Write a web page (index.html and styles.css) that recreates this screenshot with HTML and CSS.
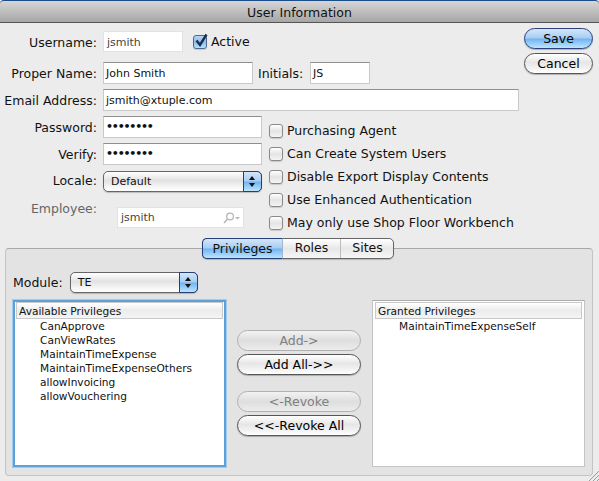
FILE: index.html
```html
<!DOCTYPE html>
<html lang="en">
<head>
  <meta charset="UTF-8" />
  <title>User Information</title>
  <link rel="stylesheet" href="styles.css">
</head>
<body>
  <div class="window">
    <div class="titlebar">User Information</div>

    <div class="top">
      <div class="form">
        <div class="row row-user">
          <span class="label">Username:</span>
          <div class="field field-user field-ro">jsmith</div>
          <span class="check check-on">
            <svg width="16" height="16" viewBox="0 0 16 16"><path d="M3.5 7.5 L7 12 L13.5 1.5" fill="none" stroke="#1c2f4f" stroke-width="2.4"/></svg>
          </span>
          <span class="active-text">Active</span>
        </div>
        <div class="row row-name">
          <span class="label">Proper Name:</span>
          <div class="field field-name">John Smith</div>
          <span class="initials-label">Initials:</span>
          <div class="field field-initials">JS</div>
        </div>
        <div class="row row-email">
          <span class="label">Email Address:</span>
          <div class="field field-email">jsmith@xtuple.com</div>
        </div>

        <div class="lower">
          <div class="lower-left">
            <div class="row row-pass">
              <span class="label">Password:</span>
              <div class="field field-pass">••••••••</div>
            </div>
            <div class="row row-verify">
              <span class="label">Verify:</span>
              <div class="field field-pass">••••••••</div>
            </div>
            <div class="row row-locale">
              <span class="label">Locale:</span>
              <div class="select select-locale">
                <span class="select-text">Default</span>
                <span class="stepper"><i class="up"></i><i class="down"></i></span>
              </div>
            </div>
            <div class="row row-employee">
              <span class="label label-off">Employee:</span>
              <div class="field field-ro field-employee">
                <span>jsmith</span>
                <svg class="search" width="20" height="12" viewBox="0 0 20 12">
                  <circle cx="8" cy="4.5" r="3.4" fill="none" stroke="#b5b5b5" stroke-width="1.2"/>
                  <path d="M5.5 7 L2 11" stroke="#b5b5b5" stroke-width="1.5"/>
                  <path d="M13 5 L18 5 L15.5 7.5 Z" fill="#b5b5b5"/>
                </svg>
              </div>
            </div>
          </div>

          <div class="checks">
            <div class="check-row"><span class="check"></span>Purchasing Agent</div>
            <div class="check-row"><span class="check"></span>Can Create System Users</div>
            <div class="check-row"><span class="check"></span>Disable Export Display Contents</div>
            <div class="check-row"><span class="check"></span>Use Enhanced Authentication</div>
            <div class="check-row"><span class="check"></span>May only use Shop Floor Workbench</div>
          </div>
        </div>
      </div>

      <div class="actions">
        <button class="btn btn-default">Save</button>
        <button class="btn">Cancel</button>
      </div>
    </div>

    <div class="panel">
      <div class="tabs">
        <span class="tab tab-on">Privileges</span>
        <span class="tab tab-roles">Roles</span>
        <span class="tab tab-sites">Sites</span>
      </div>

      <div class="module">
        <span>Module:</span>
        <div class="select select-module">
          <span class="select-text">TE</span>
          <span class="stepper"><i class="up"></i><i class="down"></i></span>
        </div>
      </div>

      <div class="lists">
        <div class="list list-focus">
          <div class="list-head">Available Privileges</div>
          <div class="list-item">CanApprove</div>
          <div class="list-item">CanViewRates</div>
          <div class="list-item">MaintainTimeExpense</div>
          <div class="list-item">MaintainTimeExpenseOthers</div>
          <div class="list-item">allowInvoicing</div>
          <div class="list-item">allowVouchering</div>
        </div>

        <div class="moves">
          <button class="btn btn-wide btn-off">Add-&gt;</button>
          <button class="btn btn-wide">Add All-&gt;&gt;</button>
          <button class="btn btn-wide btn-off btn-gap">&lt;-Revoke</button>
          <button class="btn btn-wide">&lt;&lt;-Revoke All</button>
        </div>

        <div class="list">
          <div class="list-head">Granted Privileges</div>
          <div class="list-item">MaintainTimeExpenseSelf</div>
        </div>
      </div>
    </div>

    <svg class="grip" width="11" height="11" viewBox="0 0 11 11">
      <path d="M1 11 L11 1 M5 11 L11 5 M9 11 L11 9" stroke="#9a9a9a" stroke-width="1"/>
    </svg>
  </div>
</body>
</html>
```

FILE: styles.css
```css
html, body {
  margin: 0;
  padding: 0;
  background: #ececec;
}

.window {
  position: relative;
  width: 599px;
  height: 481px;
  overflow: hidden;
  background: #ececec;
  color: #111;
  font-family: "DejaVu Sans", sans-serif;
  font-size: 12.5px;
  line-height: 16px;
}

/* Title bar */
.titlebar {
  height: 21px;
  border-top: 1px solid #1b4c8c;
  border-bottom: 1px solid #555;
  border-radius: 4px 4px 0 0;
  background: linear-gradient(#d6d6d6, #a6a6a6);
  text-align: center;
  line-height: 23px;
  box-sizing: content-box;
  margin-bottom: 0;
}

/* Top part */
.top {
  display: flex;
  height: 225px;
}

.form {
  width: 524px;
}

.row {
  display: flex;
  align-items: center;
}

.row-user { margin-top: 8px; height: 21px; }
.row-name { margin-top: 10px; height: 22px; }
.row-email { margin-top: 5px; height: 22px; }
.row-verify { margin-top: 5px; }
.row-pass, .row-verify { height: 22px; }
.row-locale { margin-top: 6px; height: 21px; }
.row-employee { margin-top: 15px; height: 21px; align-items: flex-start; }

.row-user .label, .row-name .label, .row-email .label, .initials-label {
  padding-top: 2px;
}

.row-pass .label, .row-verify .label {
  padding-top: 1px;
}

.row-locale .label {
  margin-top: -1px;
}

.label {
  width: 97px;
  margin-right: 6px;
  text-align: right;
  white-space: nowrap;
}

.label-off {
  margin-top: -6px;
  color: #666;
}

.field {
  box-sizing: border-box;
  height: 100%;
  padding: 1px 0 0 2px;
  background: #fff;
  border: 1px solid #c9c9c9;
  border-top-color: #8f8f8f;
  font-size: 11px;
  line-height: 20px;
  white-space: nowrap;
}

.field-ro {
  padding-left: 3px;
  border-color: #e2e2e2;
  color: #444;
}

.field-user { width: 80px; }
.field-name { width: 150px; }
.field-initials { width: 60px; }
.field-email { width: 416px; }

.field-pass {
  width: 159px;
  padding-top: 0;
  letter-spacing: -1.2px;
  font-weight: bold;
}

.field-employee {
  display: flex;
  justify-content: space-between;
  align-items: center;
  width: 127px;
  margin-left: 14px;
}

.search {
  margin-right: 1px;
}

.initials-label {
  width: 52px;
  margin-left: 5px;
}

.active-text {
  margin-left: 4px;
}

/* Checkboxes */
.check {
  display: inline-block;
  flex: none;
  box-sizing: border-box;
  width: 14px;
  height: 14px;
  border: 1px solid #8a8a8a;
  border-radius: 3px;
  background: linear-gradient(#fff, #e4e4e4 50%, #f4f4f4);
  box-shadow: 0 1px 1px rgba(0, 0, 0, 0.15);
}

.check svg {
  display: block;
  margin: -3px 0 0 -1px;
}

.check-on {
  margin-left: 10px;
  border-color: #4a6a94;
  background: linear-gradient(#b7d5f3, #8fbdea 50%, #b5e2fb);
}

.lower {
  display: flex;
  margin-top: 5px;
}

.lower-left {
  width: 269px;
}

.checks {
  padding-top: 8px;
}

.check-row {
  display: flex;
  align-items: center;
  gap: 4px;
  height: 14px;
  margin-bottom: 9px;
  white-space: nowrap;
}

/* Select */
.select {
  position: relative;
  box-sizing: border-box;
  height: 100%;
  border: 1px solid #666;
  border-radius: 5px;
  background: linear-gradient(#fff, #e2e2e2 45%, #f6f6f6 80%, #fff);
  font-size: 11px;
  line-height: 19px;
  box-shadow: 0 1px 1px rgba(0, 0, 0, 0.2);
}

.select-locale { width: 159px; }
.select-module { width: 128px; height: 21px; }

.select-text {
  padding-left: 7px;
}

.stepper {
  position: absolute;
  top: -1px;
  right: -1px;
  bottom: -1px;
  width: 19px;
  box-sizing: border-box;
  border: 1px solid #243f78;
  border-radius: 0 5px 5px 0;
  background: linear-gradient(#d4e6f8, #a6cdf3 48%, #70b3f0 52%, #bce6fd);
}

.stepper i {
  position: absolute;
  left: 5px;
  width: 0;
  height: 0;
  border-left: 3px solid transparent;
  border-right: 3px solid transparent;
}

.stepper .up { top: 4px; border-bottom: 4px solid #111; }
.stepper .down { bottom: 4px; border-top: 4px solid #111; }

/* Buttons */
.actions {
  display: flex;
  flex-direction: column;
  gap: 4px;
  padding-top: 5px;
}

.btn {
  box-sizing: border-box;
  width: 69px;
  height: 21px;
  padding: 0;
  border: 1px solid #555;
  border-radius: 11px;
  background: linear-gradient(#fff, #e6e6e6 45%, #f2f2f2 75%, #fff);
  color: #000;
  font-family: inherit;
  font-size: 12.5px;
  line-height: 17px;
  box-shadow: 0 1px 1px rgba(0, 0, 0, 0.25);
}

.btn-default {
  border-color: #2a3f7c;
  background: linear-gradient(#d4e6f8, #a6cdf3 48%, #70b3f0 52%, #bce6fd);
}

.btn-wide {
  width: 124px;
}

.btn-off {
  border-color: #b0b0b0;
  background: linear-gradient(#f2f2f2, #dedede 50%, #ececec);
  color: #808080;
  box-shadow: none;
}

.btn-gap {
  margin-top: 13px;
}

/* Panel with tabs */
.panel {
  box-sizing: border-box;
  height: 228px;
  margin: 0 6px 0 5px;
  padding: 0 7px;
  border: 1px solid #c4c4c4;
  border-top-color: #a8a8a8;
  border-radius: 4px;
  background: #e3e3e3;
}

.tabs {
  display: flex;
  width: 192px;
  height: 21px;
  box-sizing: border-box;
  margin: -11px auto 0 189px;
  border: 1px solid #666;
  border-radius: 5px;
  background: linear-gradient(#fff, #e8e8e8 50%, #f6f6f6);
  line-height: 18px;
  text-align: center;
  box-shadow: 0 1px 1px rgba(0, 0, 0, 0.2);
}

.tab {
  flex: none;
}

.tab-on {
  width: 81px;
  margin: -1px 0 -1px -1px;
  padding-top: 1px;
  border: 1px solid #243f78;
  border-right: 1px solid #a0b8d0;
  border-radius: 5px 0 0 5px;
  background: linear-gradient(#d4e6f8, #a6cdf3 48%, #70b3f0 52%, #bce6fd);
  box-sizing: border-box;
}

.tab-roles {
  width: 58px;
  border-right: 1px solid #bdbdbd;
  box-sizing: border-box;
}

.tab-sites {
  width: 53px;
}

.module {
  display: flex;
  align-items: center;
  gap: 7px;
  height: 21px;
  margin-top: 13px;
}

.lists {
  display: flex;
  justify-content: space-between;
  margin-top: 7px;
}

.list {
  box-sizing: border-box;
  width: 213px;
  height: 167px;
  padding: 1px 2px 2px;
  background: #fff;
  border: 1px solid #c4c4c4;
  border-top-color: #ababab;
  font-size: 10.6px;
  line-height: 14px;
}

.list-focus {
  border: 1px solid #5ba2dc;
  box-shadow: 0 0 0 1px #a5cbec;
  outline: 1px solid #5ba2dc;
  outline-offset: -2px;
}

.list-head {
  box-sizing: border-box;
  height: 17px;
  margin-bottom: 0;
  padding-left: 2px;
  border: 1px solid #c9c9c9;
  background: linear-gradient(#fff, #ececec 50%, #f4f4f4);
  line-height: 16px;
}

.list-item {
  padding-left: 24px;
  height: 14px;
}

.moves {
  display: flex;
  flex-direction: column;
  gap: 3px;
  padding-top: 30px;
}

.grip {
  position: absolute;
  right: 0;
  bottom: 0;
}
```
